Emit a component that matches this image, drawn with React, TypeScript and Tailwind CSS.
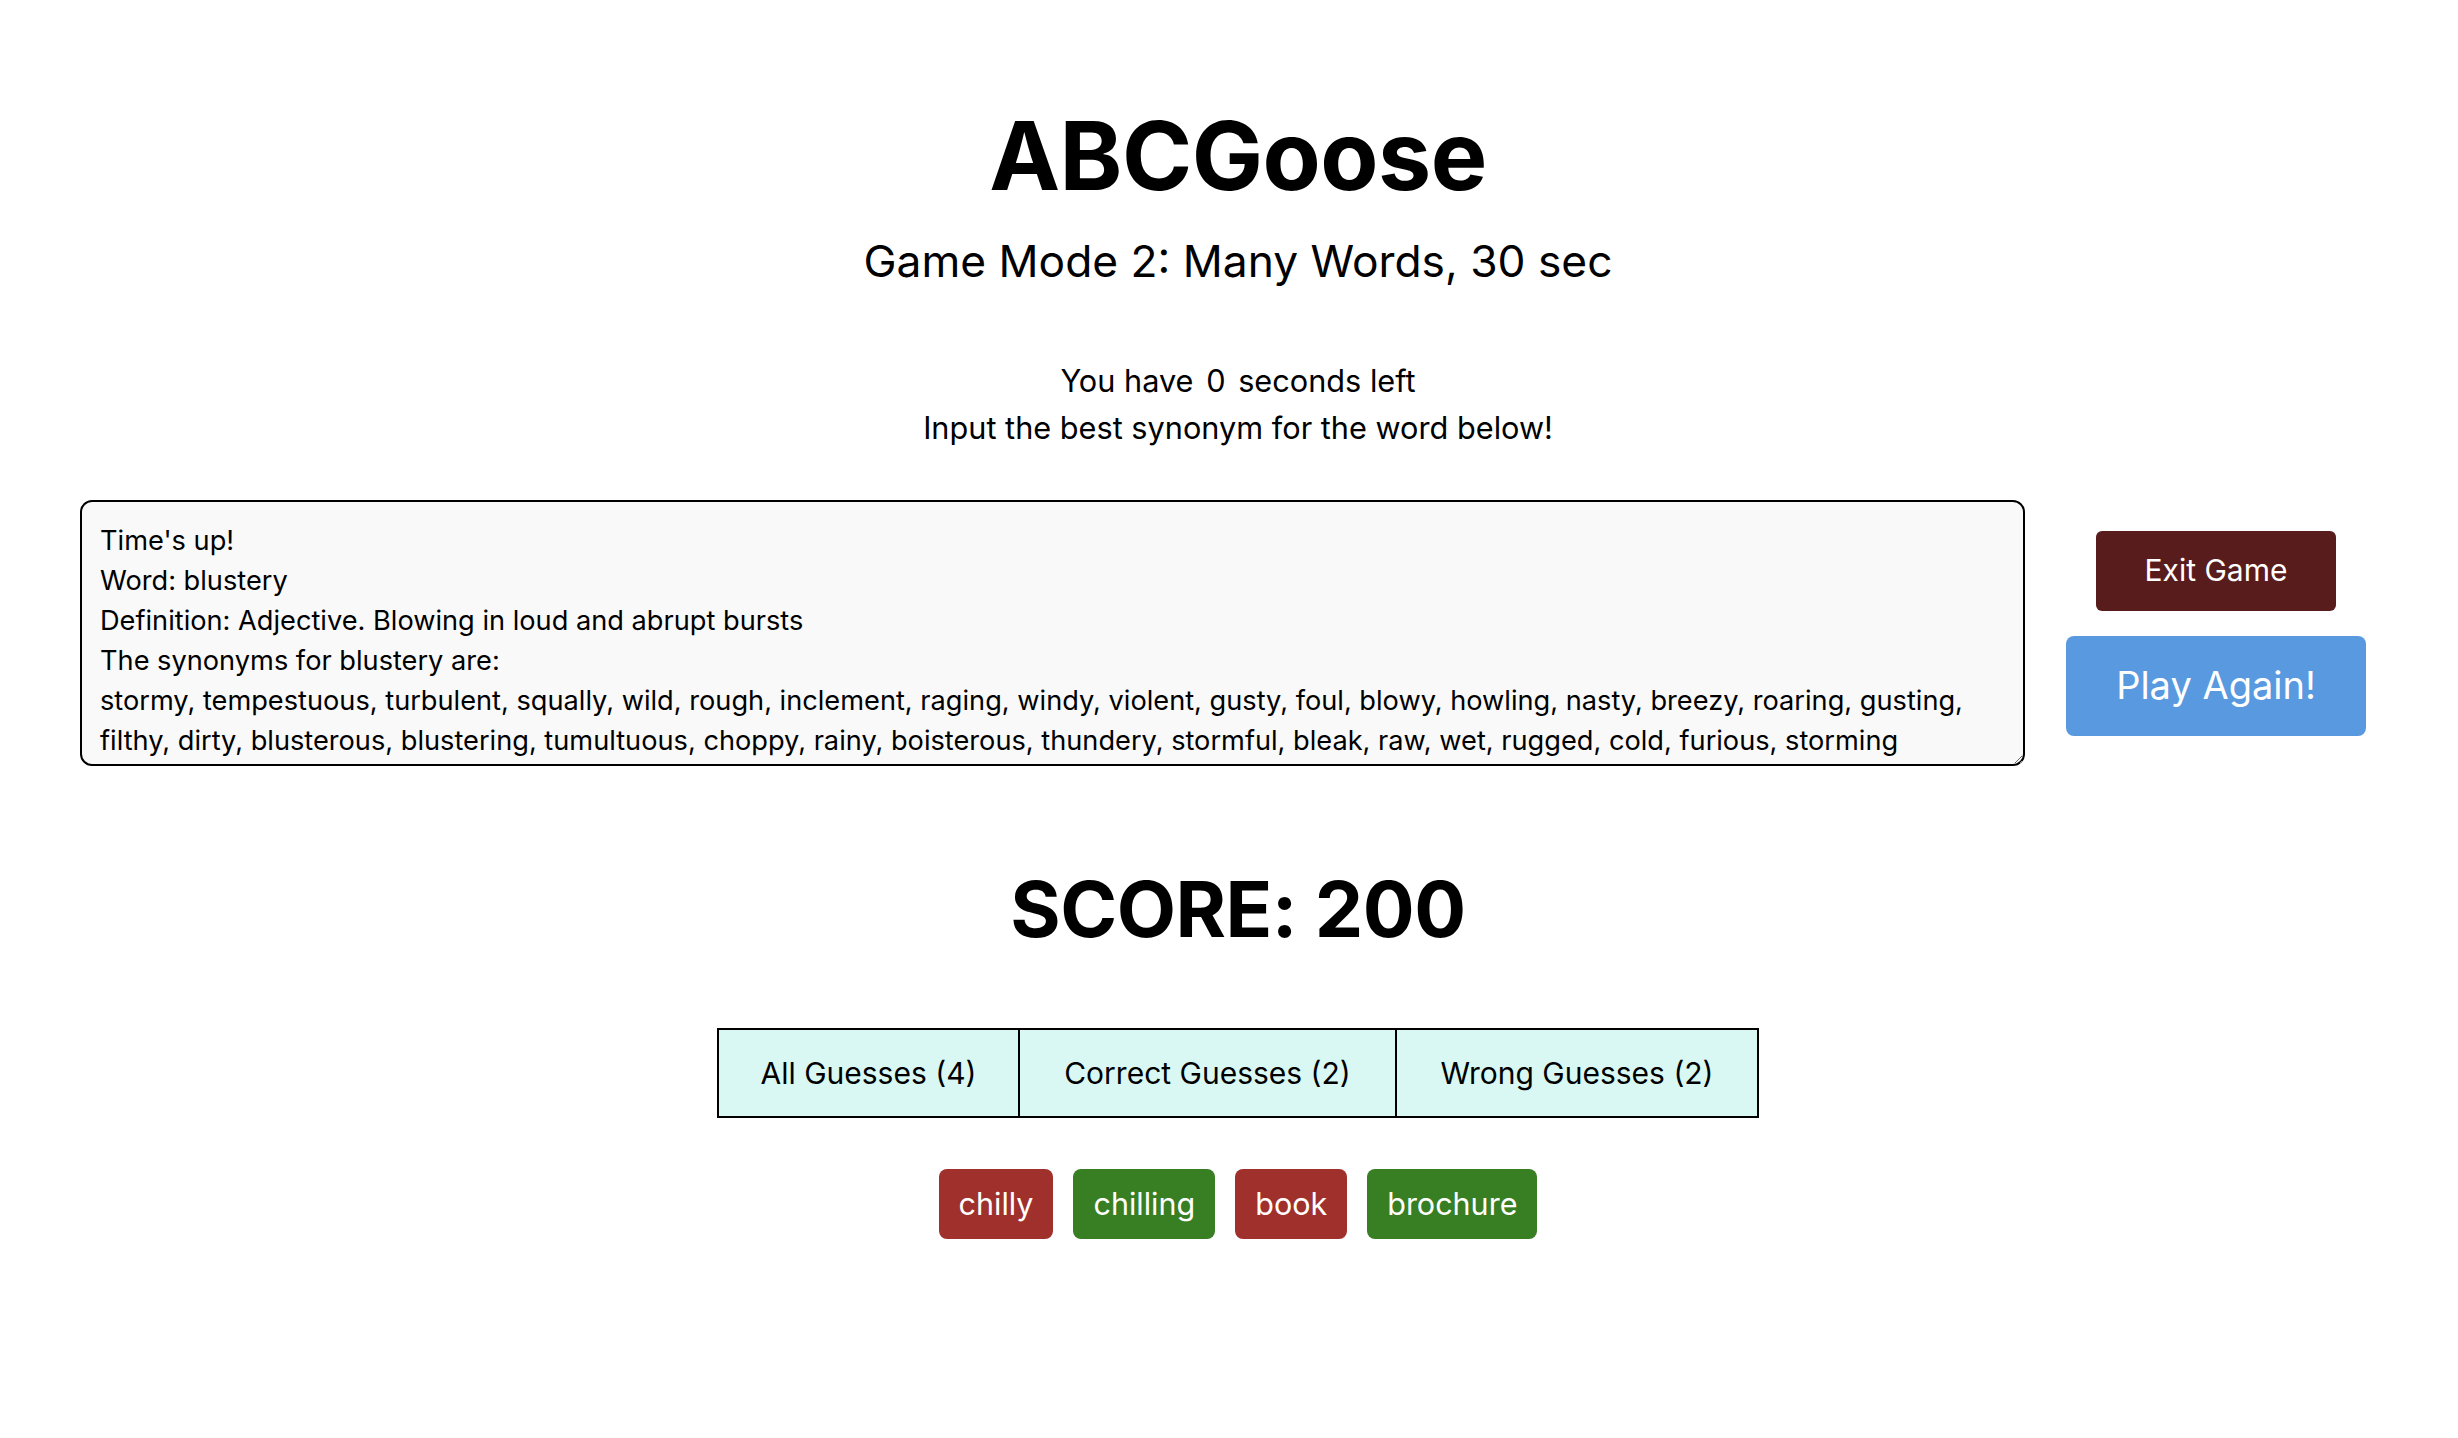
import React from "react";

const synonymText = [
  "Time's up!",
  "Word: blustery",
  "Definition: Adjective. Blowing in loud and abrupt bursts",
  "The synonyms for blustery are:",
  "stormy, tempestuous, turbulent, squally, wild, rough, inclement, raging, windy, violent, gusty, foul, blowy, howling, nasty, breezy, roaring, gusting,",
  "filthy, dirty, blusterous, blustering, tumultuous, choppy, rainy, boisterous, thundery, stormful, bleak, raw, wet, rugged, cold, furious, storming",
].join("\n");

const guesses = [
  { word: "chilly", correct: false },
  { word: "chilling", correct: true },
  { word: "book", correct: false },
  { word: "brochure", correct: true },
];

const tabs = [
  { label: "All Guesses (4)", width: "w-[303px]" },
  { label: "Correct Guesses (2)", width: "w-[377px]" },
  { label: "Wrong Guesses (2)", width: "w-[362px]" },
];

export default function App() {
  return (
    <div className="min-h-screen bg-white text-black font-['Inter',sans-serif]">
      <div className="flex flex-col items-center pl-[18px] pt-[108px]">
        <h1 className="text-[95px] leading-[95px] font-bold tracking-[-0.5px]">ABCGoose</h1>
        <h2 className="mt-[30px] text-[44.3px] leading-[56px] font-normal">
          Game Mode 2: Many Words, 30 sec
        </h2>

        <div className="mt-[68px] flex flex-col items-center text-[30.7px] leading-[47px]">
          <p>
            You have <span className="mx-[4px]">0</span> seconds left
          </p>
          <p>Input the best synonym for the word below!</p>
        </div>
      </div>

      <div className="mt-[49px] flex items-center pl-[80px]">
        <textarea
          readOnly
          value={synonymText}
          className="h-[266px] w-[1945px] resize rounded-[12px] border-2 border-black bg-[#f9f9f9] px-[18px] pt-[19px] pb-0 text-[27.2px] leading-[40px] outline-none overflow-hidden"
        />
        <div className="ml-[41px] flex w-[300px] flex-col items-center gap-[25px]">
          <button className="h-[80px] w-[240px] rounded-[6px] bg-[#591c1c] text-[30px] text-white">
            Exit Game
          </button>
          <button className="h-[100px] w-[300px] rounded-[8px] bg-[#5899df] text-[38px] text-white">
            Play Again!
          </button>
        </div>
      </div>

      <div className="flex flex-col items-center pl-[18px]">
        <h2 className="mt-[104px] text-[77px] leading-[78px] font-bold tracking-[-0.5px]">SCORE: 200</h2>

        <div className="mt-[80px] flex">
          {tabs.map((tab, i) => (
            <button
              key={tab.label}
              className={`h-[90px] ${tab.width} border-y-2 border-r-2 border-black bg-[#d9f8f3] text-[30px] ${
                i === 0 ? "border-l-2" : ""
              }`}
            >
              {tab.label}
            </button>
          ))}
        </div>

        <div className="mt-[51px] flex gap-[20px]">
          {guesses.map((g) => (
            <span
              key={g.word}
              className={`flex h-[70px] items-center rounded-[8px] px-[20px] text-[30.5px] text-white ${
                g.correct ? "bg-[#387e23]" : "bg-[#9f302c]"
              }`}
            >
              {g.word}
            </span>
          ))}
        </div>
      </div>
    </div>
  );
}
